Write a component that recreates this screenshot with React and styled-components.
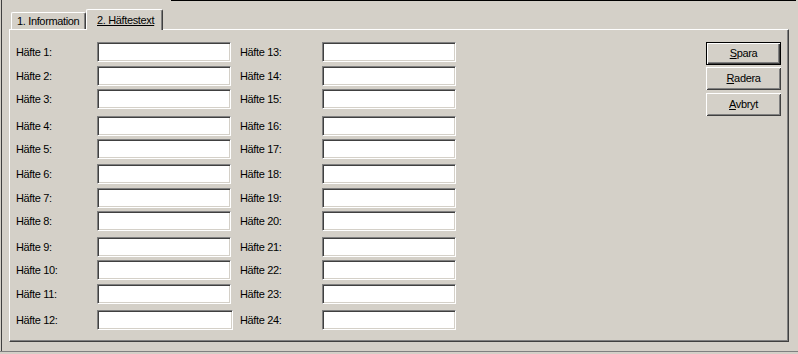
import React from "react";
import styled, { createGlobalStyle } from "styled-components";

const Global = createGlobalStyle`
  html, body { margin: 0; padding: 0; background: #d4d0c8; }
  body { font-family: "Liberation Sans", Arial, sans-serif; font-size: 11px; color: #000; letter-spacing: -0.35px; }
`;

const Page = styled.div`
  width: 798px;
  height: 354px;
  background: #d4d0c8;
  display: flex;
  flex-direction: column;
  overflow: hidden;
`;

const Window = styled.div`
  margin-left: 1px;
  border-left: 1px solid #404040;
  height: 351px;
  box-sizing: border-box;
  padding-left: 7px;
  display: flex;
  flex-direction: column;
`;

const TopEdge = styled.div`
  height: 1px;
  margin-left: 162px;
  margin-right: 2px;
  background: #000;
`;

const BottomRule = styled.div`
  height: 1px;
  background: #808080;
`;

const TabStrip = styled.div`
  margin-top: 8px;
  height: 20px;
  padding-left: 2px;
  display: flex;
  align-items: flex-end;
  position: relative;
  z-index: 2;
`;

const Tab = styled.div`
  box-sizing: border-box;
  width: ${(p) => p.$w}px;
  height: ${(p) => (p.$active ? 21 : 17)}px;
  margin-bottom: ${(p) => (p.$active ? -1 : 0)}px;
  background: #d4d0c8;
  border-top: 1px solid #fff;
  border-left: 1px solid #fff;
  border-right: 1px solid #404040;
  box-shadow: inset -1px 0 0 #808080;
  border-top-left-radius: 2px;
  border-top-right-radius: 2px;
  padding-left: ${(p) => (p.$active ? 10 : 5)}px;
  padding-top: ${(p) => (p.$active ? 4 : 2)}px;
  white-space: nowrap;
  line-height: 13px;
  text-decoration: ${(p) => (p.$active ? "underline" : "none")};
`;

const Panel = styled.div`
  box-sizing: border-box;
  width: 780px;
  height: 313px;
  border-top: 1px solid #fff;
  border-left: 1px solid #fff;
  border-right: 1px solid #404040;
  border-bottom: 1px solid #404040;
  box-shadow: inset -1px -1px 0 #808080;
  padding: 12px 7px 0 6px;
  display: flex;
  justify-content: space-between;
`;

const Fields = styled.div`
  display: flex;
  flex-direction: column;
`;

const FieldRow = styled.div`
  display: grid;
  grid-template-columns: 81px 143px 82px 134px;
  align-items: center;
  height: 20px;
  margin-top: ${(p) => p.$mt}px;
`;

const Label = styled.span`
  white-space: nowrap;
  line-height: 13px;
`;

const Input = styled.input`
  box-sizing: border-box;
  width: ${(p) => (p.$wide ? 136 : 134)}px;
  height: 20px;
  margin: 0;
  padding: 0 3px;
  background: #fff;
  border-top: 1px solid #808080;
  border-left: 1px solid #808080;
  border-right: 1px solid #fff;
  border-bottom: 1px solid #fff;
  box-shadow: inset 1px 1px 0 #404040, inset -1px -1px 0 #d4d0c8;
  font: inherit;
  outline: none;
`;

const Buttons = styled.div`
  display: flex;
  flex-direction: column;
`;

const Button = styled.button`
  box-sizing: border-box;
  width: 75px;
  height: 23px;
  margin: ${(p) => p.$mt}px 0 0 0;
  padding: 0;
  background: #d4d0c8;
  font: inherit;
  letter-spacing: inherit;
  color: #000;
  text-align: center;
  line-height: 13px;
  border: ${(p) => (p.$default ? "1px solid #000" : "none")};
  box-shadow: ${(p) =>
    p.$default
      ? "inset 1px 1px 0 #fff, inset -1px -1px 0 #404040, inset -2px -2px 0 #808080"
      : "inset 1px 1px 0 #fff, inset -1px -1px 0 #404040, inset 2px 2px 0 #d4d0c8, inset -2px -2px 0 #808080"};
`;

const rowGaps = [0, 4, 3, 7, 3, 5, 4, 3, 6, 3, 4, 6];

export default function App() {
  return (
    <>
      <Global />
      <Page>
        <Window>
          <TopEdge />
          <TabStrip>
            <Tab $w={75}>1. Information</Tab>
            <Tab $w={77} $active>
              2. Häftestext
            </Tab>
          </TabStrip>
          <Panel>
            <Fields>
              {rowGaps.map((mt, i) => (
                <FieldRow key={i} $mt={mt}>
                  <Label>Häfte {i + 1}:</Label>
                  <Input $wide={i === 11} />
                  <Label>Häfte {i + 13}:</Label>
                  <Input />
                </FieldRow>
              ))}
            </Fields>
            <Buttons>
              <Button $default $mt={0}>
                <u>S</u>para
              </Button>
              <Button $mt={2}>
                <u>R</u>adera
              </Button>
              <Button $mt={3}>
                <u>A</u>vbryt
              </Button>
            </Buttons>
          </Panel>
        </Window>
        <BottomRule />
      </Page>
    </>
  );
}
